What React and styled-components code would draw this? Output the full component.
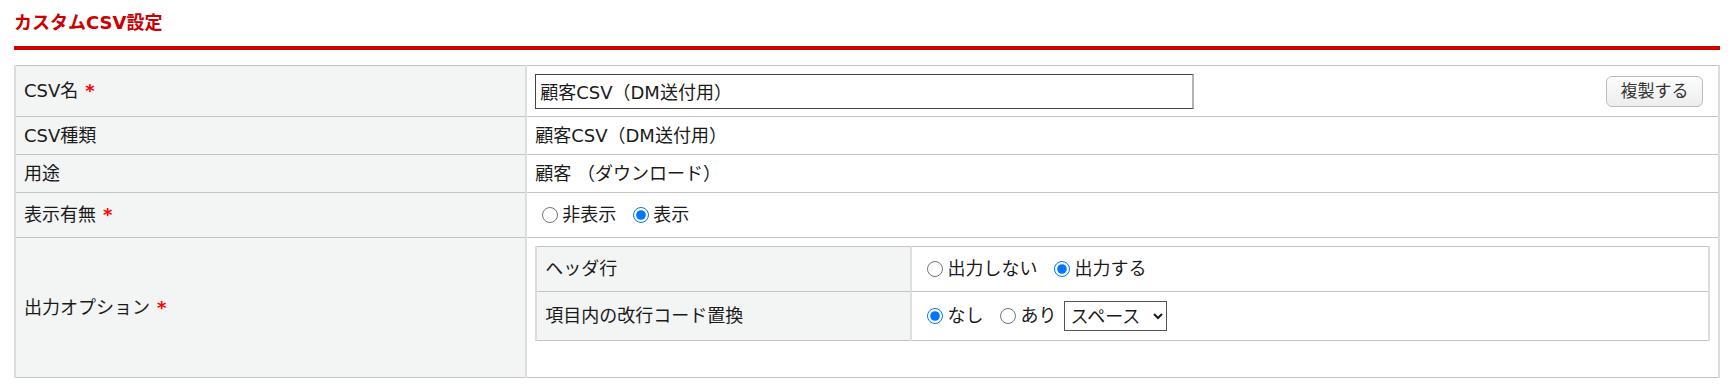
import React from 'react';
import styled, { createGlobalStyle } from 'styled-components';

const GlobalStyle = createGlobalStyle`
  body {
    margin: 0;
    background: #fff;
    color: #1a1a1a;
    font-family: "DejaVu Sans", "Noto Sans CJK JP", sans-serif;
  }
`;

const Page = styled.div`
  padding: 0 14px;
`;

const Title = styled.h2`
  margin: 0 0 15px;
  padding: 11px 0;
  font-size: 18px;
  line-height: 24px;
  font-weight: bold;
  color: #cc0000;
  border-bottom: 4px solid #cc0000;
`;

const FormTable = styled.table`
  width: 100%;
  border-collapse: collapse;
  font-size: 18px;
  line-height: 22px;
  border-top: 1px solid #c4c4c4;
  border-bottom: 1px solid #c4c4c4;
  border-left: 2px solid #dcdcdc;
  border-right: 2px solid #dcdcdc;
`;

const Row = styled.tr`
  height: ${props => props.$h}px;
`;

const Label = styled.th`
  width: ${props => props.$w};
  padding: 0 8px;
  background: #f3f4f4;
  text-align: left;
  font-weight: normal;
  vertical-align: middle;
  border-top: 1px solid #c4c4c4;
  border-bottom: 1px solid #c4c4c4;
  border-right: 2px solid #dedede;
`;

const Value = styled.td`
  padding: ${props => (props.$top ? '8px 8px 0' : '0 8px')};
  vertical-align: ${props => (props.$top ? 'top' : 'middle')};
  border-top: 1px solid #c4c4c4;
  border-bottom: 1px solid #c4c4c4;
`;

const Required = styled.span`
  margin-left: 7px;
  color: #ff0000;
  font-weight: bold;
`;

const NameLine = styled.div`
  display: flex;
  align-items: center;
  justify-content: space-between;
  padding-right: 7px;
`;

const TextInput = styled.input`
  box-sizing: border-box;
  width: 659px;
  height: 35px;
  padding: 0 4px;
  font: inherit;
  color: #1a1a1a;
  border: 1px solid #444;
  border-right: 2px solid #b3b3b3;
  border-radius: 0;
  outline: none;
`;

const CopyButton = styled.button`
  box-sizing: border-box;
  width: 97px;
  height: 31px;
  padding: 0;
  font: inherit;
  font-size: 17px;
  color: #333;
  background: linear-gradient(#fdfdfd, #ededed);
  border: 1px solid #bcbcbc;
  border-radius: 6px;
`;

const Choices = styled.div`
  display: flex;
  align-items: center;
`;

const Choice = styled.label`
  display: inline-flex;
  align-items: center;
  margin-right: 10px;
`;

const Radio = styled.input`
  width: 16px;
  height: 16px;
  margin: 0 4px 0 7px;
`;

const Picker = styled.select`
  box-sizing: border-box;
  width: 103px;
  height: 30px;
  margin-left: -2px;
  padding: 0 1px;
  font: inherit;
  color: #1a1a1a;
  background: #fff;
  border: 1px solid #555;
  border-radius: 0;
`;

function RadioSet({ name, options, checked, children }) {
  return (
    <Choices>
      {options.map(opt => (
        <Choice key={opt}>
          <Radio type="radio" name={name} defaultChecked={opt === checked} />
          {opt}
        </Choice>
      ))}
      {children}
    </Choices>
  );
}

function App() {
  return (
    <Page>
      <GlobalStyle />
      <Title>カスタムCSV設定</Title>
      <FormTable>
        <tbody>
          <Row $h={51}>
            <Label $w="30%">CSV名<Required>*</Required></Label>
            <Value>
              <NameLine>
                <TextInput type="text" defaultValue="顧客CSV（DM送付用）" />
                <CopyButton type="button">複製する</CopyButton>
              </NameLine>
            </Value>
          </Row>
          <Row $h={38}>
            <Label $w="30%">CSV種類</Label>
            <Value>顧客CSV（DM送付用）</Value>
          </Row>
          <Row $h={38}>
            <Label $w="30%">用途</Label>
            <Value>顧客 （ダウンロード）</Value>
          </Row>
          <Row $h={45}>
            <Label $w="30%">表示有無<Required>*</Required></Label>
            <Value>
              <RadioSet name="visible" options={['非表示', '表示']} checked="表示" />
            </Value>
          </Row>
          <Row $h={140}>
            <Label $w="30%">出力オプション<Required>*</Required></Label>
            <Value $top>
              <FormTable>
                <tbody>
                  <Row $h={45}>
                    <Label $w="32%">ヘッダ行</Label>
                    <Value>
                      <RadioSet name="header" options={['出力しない', '出力する']} checked="出力する" />
                    </Value>
                  </Row>
                  <Row $h={49}>
                    <Label $w="32%">項目内の改行コード置換</Label>
                    <Value>
                      <RadioSet name="newline" options={['なし', 'あり']} checked="なし">
                        <Picker defaultValue="space">
                          <option value="space">スペース</option>
                          <option value="none">削除</option>
                        </Picker>
                      </RadioSet>
                    </Value>
                  </Row>
                </tbody>
              </FormTable>
            </Value>
          </Row>
        </tbody>
      </FormTable>
    </Page>
  );
}

export default App;
